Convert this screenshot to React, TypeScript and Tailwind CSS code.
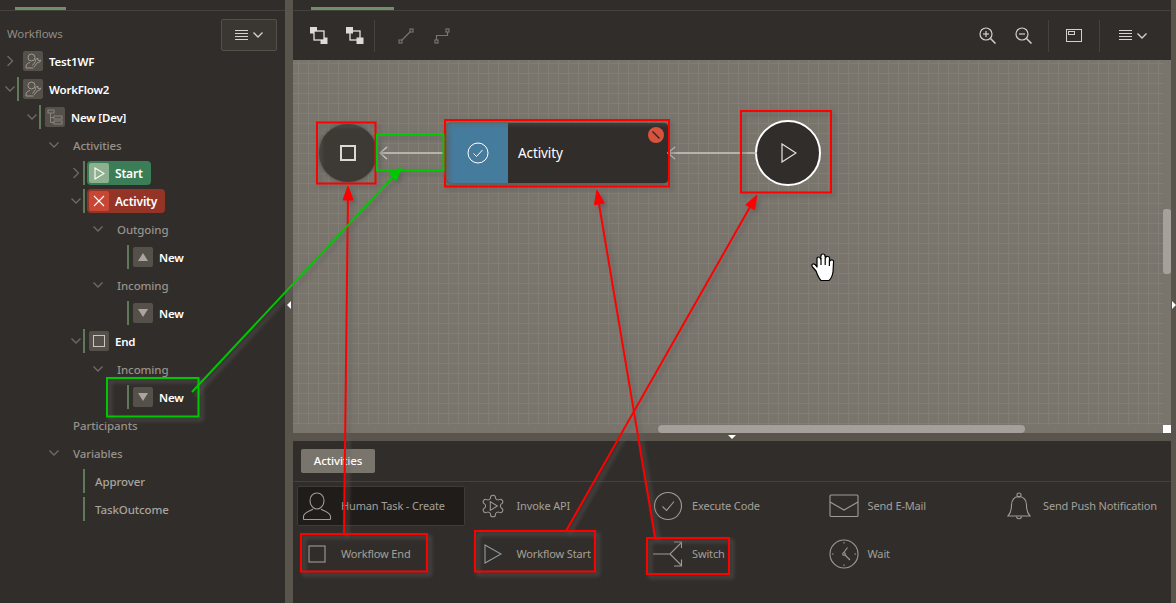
import type { ReactNode } from "react";

const levelClass = [
  "pl-0",
  "pl-[22px]",
  "pl-[44px]",
  "pl-[66px]",
  "pl-[88px]",
  "pl-[110px]",
];

function Chevron({ dir }: { dir: "right" | "down" }) {
  return (
    <svg width="10" height="10" viewBox="0 0 10 10" fill="none" stroke="#6f6b65" strokeWidth="1.3">
      {dir === "down" ? <path d="M0.5 2.5 5 7 9.5 2.5" /> : <path d="M2.5 0 7.5 5 2.5 10" />}
    </svg>
  );
}

function UserWrench() {
  return (
    <svg width="16" height="16" viewBox="0 0 16 16" fill="none" stroke="#a09b94" strokeWidth="1">
      <circle cx="6.5" cy="4.5" r="3.5" />
      <path d="M1 15v-1.5C1 11 3 10 5 9.5M1 15h7.5" />
      <path d="M9 14l3.5-4.5c1.5.5 3-.5 3-2.5l-1.5 1-1.2-.8.3-1.7c-2-.2-3.2 1.3-2.6 3L7.500 12.500" />
    </svg>
  );
}

function Hierarchy() {
  return (
    <svg width="16" height="16" viewBox="0 0 16 16" fill="none" stroke="#8a857e" strokeWidth="1">
      <rect x="1" y="1" width="6" height="3" />
      <rect x="7" y="7" width="8" height="3" />
      <rect x="7" y="12" width="8" height="3" />
      <path d="M3.500 4v9.500H7M3.500 8.500H7" />
    </svg>
  );
}

function IconBox({ children }: { children: ReactNode }) {
  return (
    <span className="flex h-5 w-5 shrink-0 items-center justify-center rounded-[2px] bg-[#55504a]">
      {children}
    </span>
  );
}

function TreeRow({
  level,
  chevron,
  bar,
  icon,
  label,
  strong,
}: {
  level: number;
  chevron?: "right" | "down";
  bar?: boolean;
  icon?: ReactNode;
  label: string;
  strong?: boolean;
}) {
  return (
    <div className={`flex h-7 items-center ${levelClass[level]}`}>
      <span className="flex w-[17px] shrink-0 justify-start pl-[5px]">
        {chevron ? <Chevron dir={chevron} /> : null}
      </span>
      {bar ? <span className="h-6 w-[2px] shrink-0 bg-[#5f7a58]" /> : icon ? <span className="w-[2px] shrink-0" /> : null}
      {icon ? <span className="ml-[4px]">{icon}</span> : null}
      <span
        className={
          strong
            ? "ml-[6px] mt-[2px] text-[11.5px] font-semibold tracking-[-0.2px] text-white"
            : bar
              ? "ml-[10px] mt-[2px] text-[11.5px] font-medium tracking-[-0.1px] text-[#a8a49e]"
              : "ml-[12px] mt-[2px] text-[11.5px] font-medium tracking-[-0.1px] text-[#96928b]"
        }
      >
        {label}
      </span>
    </div>
  );
}

function PillRow({
  color,
  boxColor,
  chevron,
  glyph,
  label,
}: {
  color: string;
  boxColor: string;
  chevron: "right" | "down";
  glyph: ReactNode;
  label: string;
}) {
  return (
    <div className="flex h-7 items-center pl-[66px]">
      <span className="flex w-[17px] shrink-0 justify-start pl-[5px]">
        <Chevron dir={chevron} />
      </span>
      <span className="h-6 w-[2px] shrink-0 bg-[#5f7a58]" />
      <span className={`ml-[2px] flex h-6 items-center rounded-[4px] pl-[2px] pr-[8px] ${color}`}>
        <span className={`flex h-5 w-5 items-center justify-center rounded-[2px] ${boxColor}`}>{glyph}</span>
        <span className="ml-[6px] mt-[2px] text-[12px] font-semibold tracking-[-0.2px] text-white">{label}</span>
      </span>
    </div>
  );
}

function Triangle({ up }: { up?: boolean }) {
  return (
    <svg width="10" height="8" viewBox="0 0 10 8" fill="#aaa69f">
      {up ? <path d="M5 0 10 8H0z" /> : <path d="M5 8 0 0h10z" />}
    </svg>
  );
}

function MenuGlyph() {
  return (
    <span className="flex items-center gap-[5px]">
      <svg width="13" height="11" viewBox="0 0 13 11" stroke="#d6d3ce" strokeWidth="1">
        <path d="M0 .5h13M0 3.500h13M0 6.500h13M0 9.500h13" />
      </svg>
      <svg width="10" height="6" viewBox="0 0 10 6" fill="none" stroke="#d6d3ce" strokeWidth="1.300">
        <path d="M.5.5 5 5 9.500.5" />
      </svg>
    </span>
  );
}

function Layers({ front }: { front?: boolean }) {
  const frame = <rect x="4" y="4" width="10" height="9" fill="#312d2a" stroke="#e4e1dc" strokeWidth="1.300" />;
  return (
    <svg width="18" height="17" viewBox="0 0 18 17">
      {front ? frame : null}
      <rect x="0" y="0" width="7" height="6.500" fill="#dedbd6" />
      <rect x="10.500" y="10.500" width="7" height="6.500" fill="#dedbd6" />
      {front ? null : frame}
    </svg>
  );
}

function ToolBtn({ children }: { children: ReactNode }) {
  return <span className="flex h-9 w-9 items-center justify-center">{children}</span>;
}

function Sep() {
  return <span className="block h-8 w-px shrink-0 bg-[#45413c]" />;
}

function Zoom({ plus }: { plus?: boolean }) {
  return (
    <svg width="17" height="17" viewBox="0 0 17 17" fill="none" stroke="#d3d0cb" strokeWidth="1.200">
      <circle cx="7" cy="7" r="6" />
      <path d="M11.500 11.500 16.500 16.500" strokeWidth="1.500" />
      <path d="M4 7h6" />
      {plus ? <path d="M7 4v6" /> : null}
    </svg>
  );
}

const stroke = "#a09c95";

function PaletteIcon({ name }: { name: string }) {
  if (name === "human")
    return (
      <svg width="30" height="30" viewBox="0 0 30 30" fill="none" stroke={stroke} strokeWidth="1.100">
        <path d="M15 2c4 0 7 3 7 7.500S19 18 15 18 8 14 8 9.500 11 2 15 2z" />
        <path d="M1.500 28.500v-3c0-4 6-5 9.500-7.500M28.500 28.500v-3c0-4-6-5-9.500-7.500M1.500 28.500h27" />
      </svg>
    );
  if (name === "api")
    return (
      <svg width="26" height="26" viewBox="0 0 24 24" fill="none" stroke={stroke} strokeWidth="0.950">
        <path d="M12.220 2h-.44a2 2 0 0 0-2 2v.18a2 2 0 0 1-1 1.730l-.43.25a2 2 0 0 1-2 0l-.15-.08a2 2 0 0 0-2.730.73l-.22.38a2 2 0 0 0 .73 2.730l.15.1a2 2 0 0 1 1 1.720v.51a2 2 0 0 1-1 1.740l-.15.09a2 2 0 0 0-.73 2.730l.22.38a2 2 0 0 0 2.730.73l.15-.08a2 2 0 0 1 2 0l.43.25a2 2 0 0 1 1 1.730V20a2 2 0 0 0 2 2h.44a2 2 0 0 0 2-2v-.18a2 2 0 0 1 1-1.730l.43-.25a2 2 0 0 1 2 0l.15.08a2 2 0 0 0 2.730-.73l.22-.39a2 2 0 0 0-.73-2.730l-.15-.08a2 2 0 0 1-1-1.740v-.5a2 2 0 0 1 1-1.740l.15-.09a2 2 0 0 0 .73-2.730l-.22-.38a2 2 0 0 0-2.730-.73l-.15.08a2 2 0 0 1-2 0l-.43-.25a2 2 0 0 1-1-1.730V4a2 2 0 0 0-2-2z" />
        <path d="M9.500 8l6.500 4-6.500 4z" />
      </svg>
    );
  if (name === "code")
    return (
      <svg width="30" height="30" viewBox="0 0 30 30" fill="none" stroke={stroke} strokeWidth="1.100">
        <circle cx="15" cy="15" r="13.500" />
        <path d="M9.500 15.500l4 4 7.500-9" />
      </svg>
    );
  if (name === "mail")
    return (
      <svg width="30" height="24" viewBox="0 0 30 24" fill="none" stroke={stroke} strokeWidth="1.100">
        <rect x="1" y="1" width="28" height="21.500" rx="1" />
        <path d="M1 8l14 8 14-8" />
      </svg>
    );
  if (name === "bell")
    return (
      <svg width="24" height="28" viewBox="0 0 24 28" fill="none" stroke={stroke} strokeWidth="1.100">
        <path d="M1 24c3-3 3.500-6 3.500-11 0-5 3-8.500 7.500-8.500s7.500 3.500 7.500 8.500c0 5 .5 8 3.500 11z" />
        <circle cx="12" cy="3" r="2" />
        <path d="M9.500 24.500c0 3 5 3 5 0" />
      </svg>
    );
  if (name === "end")
    return (
      <svg width="18" height="18" viewBox="0 0 18 18" fill="none" stroke={stroke} strokeWidth="1.100">
        <rect x="1" y="1" width="16" height="16" />
      </svg>
    );
  if (name === "start")
    return (
      <svg width="18" height="20" viewBox="0 0 18 20" fill="none" stroke="#8f9ba3" strokeWidth="1.100">
        <path d="M1 1l16 9-16 9z" />
      </svg>
    );
  if (name === "switch")
    return (
      <svg width="30" height="26" viewBox="0 0 30 26" fill="none" stroke={stroke} strokeWidth="1.100">
        <path d="M0 13h17L28 2M17 13l11 11" />
        <path d="M21 1h7.500v6M28.500 18.500V25H21" />
      </svg>
    );
  return (
    <svg width="30" height="30" viewBox="0 0 30 30" fill="none" stroke={stroke} strokeWidth="1.100">
      <circle cx="15" cy="15" r="14" />
      <circle cx="15" cy="15" r="1.300" />
      <path d="M14.500 14l4-5.500M16 16l5 5M15 3v1.500M15 25.500V27M3 15h1.500M25.500 15H27" />
    </svg>
  );
}

function PaletteItem({ name, label, active }: { name: string; label: string; active?: boolean }) {
  return (
    <div
      className={`flex h-10 items-center rounded-[2px] border ${
        active ? "border-[#3f3b37] bg-[#201c19]" : "border-transparent"
      }`}
    >
      <span className="flex w-[38px] shrink-0 justify-center">
        <PaletteIcon name={name} />
      </span>
      <span className="ml-[5px] text-[11px] tracking-[-0.15px] text-[#a3a099]">{label}</span>
    </div>
  );
}

function HandCursor() {
  return (
    <svg width="26" height="29" viewBox="0 0 26 29" stroke="#000" strokeWidth="1.200" strokeLinejoin="round">
      <path
        fill="#fff"
        d="M6 18 2.500 14Q1 11.500 3 11t4 3V6q0-2 1.800-2 1.400 0 1.700 2L11 3q0-2 2-2t2 2l.5 2q.5-2 2.500-1.500T19.500 6v2.500Q20.500 6.500 22.500 7q1.500.5 1 3L23 19q-1 6-4 8.500h-8Q8.500 25 6 18z"
      />
      <path fill="none" d="M11 5v7M15.200 5v7M19.400 8v5" />
    </svg>
  );
}

function Annotations() {
  return (
    <svg className="pointer-events-none absolute inset-0 h-full w-full" viewBox="0 0 1176 603" fill="none">
      <g stroke="#c9c6c0" strokeWidth="1.500">
        <path d="M380 153H443M387 147l-7 6 7 6" />
        <path d="M668 153H757M675 147l-7 6 7 6" />
      </g>
      <g className="drop-shadow-[3px_3px_2px_rgba(95,95,95,0.85)]" stroke="#ff0000" strokeWidth="2">
        <rect x="317" y="122.500" width="58.500" height="61" />
        <rect x="445" y="120" width="224" height="66.500" />
        <rect x="741" y="111" width="90" height="81.500" />
        <rect x="301" y="534" width="126" height="37.500" />
        <rect x="475" y="531" width="120" height="40.500" />
        <rect x="647" y="538" width="82" height="36" />
        <path d="M344 533 348 196" />
        <path d="M655 537 599 204" />
        <path d="M566 531 750 207" />
        <path fill="#ff0000" strokeWidth="1" d="M348 186l-5 14h10z" />
        <path fill="#ff0000" strokeWidth="1" d="M597 190l7.200 13-9.800 1.600z" />
        <path fill="#ff0000" strokeWidth="1" d="M757 195l-2.600 14.700-8.600-5z" />
      </g>
      <g className="drop-shadow-[3px_3px_2px_rgba(95,95,95,0.85)]" stroke="#00c800" strokeWidth="2">
        <rect x="107" y="378" width="91.500" height="38.500" />
        <rect x="377" y="135" width="66.500" height="35.500" />
        <path d="M192 392 393 177" />
        <path fill="#00c800" strokeWidth="1" d="M402 167l-5.800 13.600-7.400-6.800z" />
      </g>
    </svg>
  );
}

export default function App() {
  return (
    <div className="relative flex h-[603px] w-[1176px] overflow-hidden bg-[#59554d] font-['Noto_Sans',sans-serif]">
      <aside className="flex h-full w-[285px] shrink-0 flex-col bg-[#312d2a]">
        <div className="flex h-[11px] items-end border-b border-[#45413c] pl-[15px]">
          <span className="h-[3px] w-[51px] bg-[#6f8f66]" />
        </div>
        <div className="flex h-[36px] shrink-0 items-start justify-between pl-[7px] pr-[8px]">
          <span className="mt-[15px] text-[11.5px] leading-4 tracking-[-0.1px] text-[#8f8c86]">Workflows</span>
          <button className="relative mt-[8px] flex h-8 w-14 items-center justify-center rounded-[2px] border border-[#55504a] bg-[#3a3733]">
            <MenuGlyph />
          </button>
        </div>
        <TreeRow level={0} chevron="right" icon={<IconBox><UserWrench /></IconBox>} label="Test1WF" strong />
        <TreeRow level={0} chevron="down" bar icon={<IconBox><UserWrench /></IconBox>} label="WorkFlow2" strong />
        <TreeRow level={1} chevron="down" bar icon={<IconBox><Hierarchy /></IconBox>} label="New [Dev]" strong />
        <TreeRow level={2} chevron="down" label="Activities" />
        <PillRow
          color="bg-[#3a7d57]"
          boxColor="bg-[#8fb08e]"
          chevron="right"
          label="Start"
          glyph={
            <svg width="11" height="13" viewBox="0 0 11 13" fill="none" stroke="#fff" strokeWidth="1.100">
              <path d="M1 1l9 5.500L1 12z" />
            </svg>
          }
        />
        <PillRow
          color="bg-[#943427]"
          boxColor="bg-[#c74634]"
          chevron="down"
          label="Activity"
          glyph={
            <svg width="12" height="12" viewBox="0 0 12 12" stroke="#fff" strokeWidth="1.100">
              <path d="M1 1l10 10M11 1 1 11" />
            </svg>
          }
        />
        <TreeRow level={4} chevron="down" label="Outgoing" />
        <TreeRow level={5} bar icon={<IconBox><Triangle up /></IconBox>} label="New" strong />
        <TreeRow level={4} chevron="down" label="Incoming" />
        <TreeRow level={5} bar icon={<IconBox><Triangle /></IconBox>} label="New" strong />
        <TreeRow
          level={3}
          chevron="down"
          bar
          icon={
            <IconBox>
              <span className="h-3 w-3 border border-[#c9c6c0]" />
            </IconBox>
          }
          label="End"
          strong
        />
        <TreeRow level={4} chevron="down" label="Incoming" />
        <TreeRow level={5} bar icon={<IconBox><Triangle /></IconBox>} label="New" strong />
        <TreeRow level={2} label="Participants" />
        <TreeRow level={2} chevron="down" label="Variables" />
        <TreeRow level={3} bar label="Approver" />
        <TreeRow level={3} bar label="TaskOutcome" />
      </aside>

      <div className="relative flex w-2 shrink-0 items-center">
        <span className="relative top-[3px] ml-[2px] h-0 w-0 border-y-[4px] border-r-[4px] border-y-transparent border-r-white" />
      </div>

      <main className="flex h-full w-[878px] shrink-0 flex-col">
        <div className="flex h-[11px] shrink-0 items-end border-b border-[#45413c] bg-[#312d2a] pl-[18px]">
          <span className="h-[3px] w-[83px] bg-[#6f8f66]" />
        </div>
        <div className="flex h-[49px] shrink-0 items-center bg-[#312d2a] pl-2">
          <ToolBtn><Layers /></ToolBtn>
          <ToolBtn><Layers front /></ToolBtn>
          <span className="ml-px"><Sep /></span>
          <span className="ml-[13px]">
            <ToolBtn>
              <svg width="16" height="16" viewBox="0 0 16 16" fill="none" stroke="#77736d" strokeWidth="1.200">
                <rect x="1" y="12" width="3" height="3" />
                <rect x="12" y="1" width="3" height="3" />
                <path d="M4 12 12 4" />
              </svg>
            </ToolBtn>
          </span>
          <ToolBtn>
            <svg width="16" height="16" viewBox="0 0 16 16" fill="none" stroke="#77736d" strokeWidth="1.200">
              <rect x="1" y="12" width="3" height="3" />
              <rect x="12" y="1" width="3" height="3" />
              <path d="M2.500 12V7.500h11V4" />
            </svg>
          </ToolBtn>
          <div className="ml-auto flex items-center pr-[13px]">
            <ToolBtn><Zoom plus /></ToolBtn>
            <ToolBtn><Zoom /></ToolBtn>
            <span className="ml-[7px]"><Sep /></span>
            <span className="ml-[7px]">
              <ToolBtn>
                <svg width="16" height="13" viewBox="0 0 16 13" fill="none" stroke="#d3d0cb" strokeWidth="1">
                  <rect x=".5" y=".5" width="15" height="12" />
                  <rect x="2.500" y="2.500" width="6" height="3" />
                </svg>
              </ToolBtn>
            </span>
            <span className="ml-[7px]"><Sep /></span>
            <span className="ml-[7px] flex w-[51px] justify-center"><MenuGlyph /></span>
          </div>
        </div>

        <section className="flex min-h-0 flex-1 flex-col bg-[#7a756c]">
          <div className="flex min-h-0 flex-1">
            <div className="relative flex-1 bg-[linear-gradient(#827e76_1px,transparent_1px),linear-gradient(90deg,#827e76_1px,transparent_1px)] bg-[size:10px_10px] bg-[position:5px_3px]">
              <div className="absolute left-[26px] top-[64px] flex h-[58px] w-[58px] items-center justify-center rounded-full bg-[#3d3935] shadow-[0_0_4px_rgba(0,0,0,0.4)]">
                <span className="h-[16px] w-[16px] border-2 border-[#dcd9d4]" />
              </div>
              <div className="absolute left-[154px] top-[63px] flex h-[60px] w-[221px] overflow-hidden rounded-[4px] bg-[#312d2a] shadow-[0_1px_4px_rgba(0,0,0,0.4)]">
                <span className="flex w-[61px] items-center justify-center bg-[#457b9d]">
                  <svg width="22" height="22" viewBox="0 0 22 22" fill="none" stroke="#fff" strokeWidth="1">
                    <circle cx="11" cy="11" r="10" />
                    <path d="M6.500 11.500l3 3 6-6.500" />
                  </svg>
                </span>
                <span className="ml-[10px] self-center text-[13.5px] tracking-[-0.1px] text-white">Activity</span>
                <span className="absolute right-[4px] top-[4px] flex h-4 w-4 items-center justify-center rounded-full bg-[#d9523c]">
                  <svg width="10" height="10" viewBox="0 0 10 10" stroke="#312d2a" strokeWidth="1.600">
                    <path d="M1.500 1.500l7 7" />
                  </svg>
                </span>
              </div>
              <div className="absolute left-[462px] top-[60px] flex h-[66px] w-[66px] items-center justify-center rounded-full border-2 border-white bg-[#312d2a]">
                <svg className="ml-[1px]" width="16" height="20" viewBox="0 0 16 20" fill="none" stroke="#e6e4e0" strokeWidth="1.200">
                  <path d="M1 1l14 9-14 9z" />
                </svg>
              </div>
              <div className="absolute left-[517px] top-[193px]">
                <HandCursor />
              </div>
            </div>
            <div className="w-2 shrink-0 pt-[149px]">
              <div className="h-[65px] w-2 rounded-[3px] bg-[#a5a19a]" />
            </div>
          </div>
          <div className="flex h-2 shrink-0">
            <div className="flex-1 pl-[365px]">
              <div className="h-2 w-[367px] rounded-[4px] bg-[#a5a19a]" />
            </div>
            <span className="h-2 w-2 bg-white" />
          </div>
        </section>

        <div className="flex h-2 shrink-0 justify-center">
          <span className="relative top-[2px] h-0 w-0 border-x-[4px] border-t-[4px] border-x-transparent border-t-white" />
        </div>

        <div className="flex h-[162px] shrink-0 flex-col bg-[#312d2a]">
          <div className="h-[41px] shrink-0 border-b border-[#45413c] pl-2 pt-2">
            <span className="flex h-6 w-[74px] items-center justify-center rounded-[2px] bg-[#7a756c] text-[11.5px] font-medium tracking-[-0.1px] text-white">
              Activities
            </span>
          </div>
          <div className="mt-[4px] grid grid-cols-[repeat(5,168px)] gap-x-[7.5px] gap-y-2 pl-[4px]">
            <PaletteItem name="human" label="Human Task - Create" active />
            <PaletteItem name="api" label="Invoke API" />
            <PaletteItem name="code" label="Execute Code" />
            <PaletteItem name="mail" label="Send E-Mail" />
            <PaletteItem name="bell" label="Send Push Notification" />
            <PaletteItem name="end" label="Workflow End" />
            <PaletteItem name="start" label="Workflow Start" />
            <PaletteItem name="switch" label="Switch" />
            <PaletteItem name="wait" label="Wait" />
          </div>
        </div>
      </main>

      <div className="flex w-[5px] shrink-0 items-center">
        <span className="relative top-[3px] ml-[1px] h-0 w-0 border-y-[4px] border-l-[4px] border-y-transparent border-l-white" />
      </div>

      <Annotations />
    </div>
  );
}
